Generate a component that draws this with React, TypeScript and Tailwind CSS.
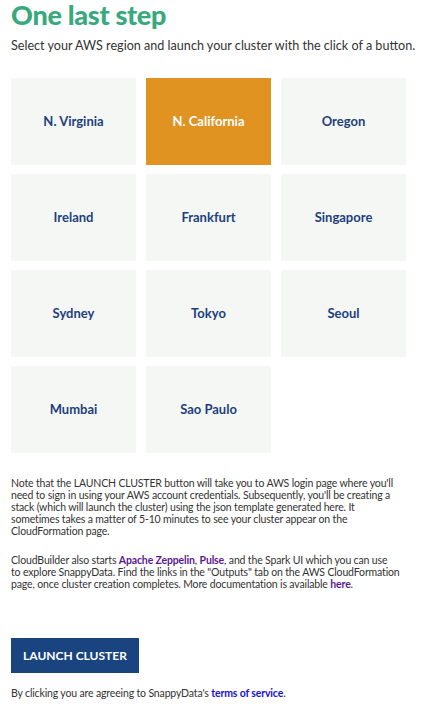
import React from 'react'

const regions = [
  'N. Virginia',
  'N. California',
  'Oregon',
  'Ireland',
  'Frankfurt',
  'Singapore',
  'Sydney',
  'Tokyo',
  'Seoul',
  'Mumbai',
  'Sao Paulo',
]

export default function App() {
  const selected = 'N. California'

  return (
    <div className="min-h-[712px] bg-white px-[11px] font-['Lato',sans-serif] text-[#333]">
      {/* Heading */}
      <h1 className="pt-[1px] text-[27px] font-black leading-[27px] tracking-[-0.3px] text-[#38a97d]">One last step</h1>
      <p className="mt-[10px] whitespace-nowrap text-[12.6px] leading-[16px] text-[#333]">
        Select your AWS region and launch your cluster with the click of a button.
      </p>

      {/* Region tiles */}
      <div className="mt-[24px] grid w-[395px] grid-cols-3 gap-x-[10px] gap-y-[9px]">
        {regions.map((r) => (
          <button
            key={r}
            className={
              r === selected
                ? 'flex h-[87px] items-center justify-center bg-[#e09321] text-[13px] font-bold text-white'
                : 'flex h-[87px] items-center justify-center bg-[#f5f7f5] text-[13px] font-bold text-[#1e3f7e]'
            }
          >
            {r}
          </button>
        ))}
      </div>

      {/* Notes */}
      <div className="mt-[24px] w-[410px] text-[10.5px] leading-[12px] tracking-[-0.15px] text-[#333]">
        <p>
          Note that the LAUNCH CLUSTER button will take you to AWS login page where you'll
          <br />
          need to sign in using your AWS account credentials. Subsequently, you'll be creating a
          <br />
          stack (which will launch the cluster) using the json template generated here. It
          <br />
          sometimes takes a matter of 5-10 minutes to see your cluster appear on the
          <br />
          CloudFormation page.
        </p>
        <p className="mt-[17px]">
          CloudBuilder also starts <a href="#" className="font-bold text-[#5b1a8f]">Apache Zeppelin</a>,{' '}
          <a href="#" className="font-bold text-[#5b1a8f]">Pulse</a>, and the Spark UI which you can use
          <br />
          to explore SnappyData. Find the links in the "Outputs" tab on the AWS CloudFormation
          <br />
          page, once cluster creation completes. More documentation is available{' '}
          <a href="#" className="font-bold text-[#5b1a8f]">here</a>.
        </p>
      </div>

      {/* Launch */}
      <button className="mt-[48px] flex h-[35px] w-[128px] items-center justify-center bg-[#1a4480] text-[12px] font-bold text-white">
        LAUNCH CLUSTER
      </button>
      <p className="mt-[14px] text-[10.5px] leading-[12px] tracking-[-0.15px] text-[#333]">
        By clicking you are agreeing to SnappyData's{' '}
        <a href="#" className="font-bold text-[#1a10d6]">terms of service</a>.
      </p>
    </div>
  )
}
